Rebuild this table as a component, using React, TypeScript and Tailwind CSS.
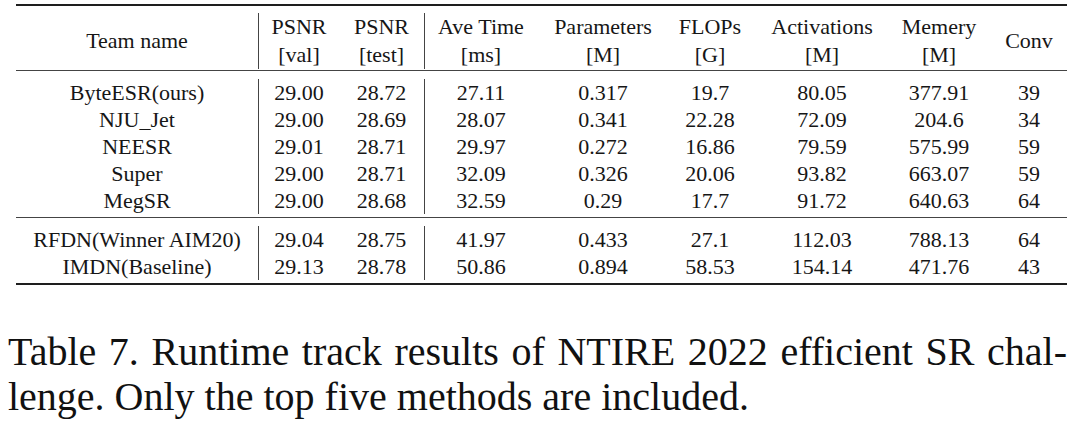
const cols = [
  "w-[243px] border-r border-[#444]",
  "w-[80px]",
  "w-[86px] border-r border-[#444]",
  "w-[112px]",
  "ml-[11px] w-[110px]",
  "ml-[17px] w-[70px]",
  "ml-[22px] w-[110px]",
  "ml-[17px] w-[90px]",
  "ml-[10px] w-[70px]",
];

const header: string[][] = [
  ["Team name"],
  ["PSNR", "[val]"],
  ["PSNR", "[test]"],
  ["Ave Time", "[ms]"],
  ["Parameters", "[M]"],
  ["FLOPs", "[G]"],
  ["Activations", "[M]"],
  ["Memery", "[M]"],
  ["Conv"],
];

const top5 = [
  ["ByteESR(ours)", "29.00", "28.72", "27.11", "0.317", "19.7", "80.05", "377.91", "39"],
  ["NJU_Jet", "29.00", "28.69", "28.07", "0.341", "22.28", "72.09", "204.6", "34"],
  ["NEESR", "29.01", "28.71", "29.97", "0.272", "16.86", "79.59", "575.99", "59"],
  ["Super", "29.00", "28.71", "32.09", "0.326", "20.06", "93.82", "663.07", "59"],
  ["MegSR", "29.00", "28.68", "32.59", "0.29", "17.7", "91.72", "640.63", "64"],
];

const baselines = [
  ["RFDN(Winner AIM20)", "29.04", "28.75", "41.97", "0.433", "27.1", "112.03", "788.13", "64"],
  ["IMDN(Baseline)", "29.13", "28.78", "50.86", "0.894", "58.53", "154.14", "471.76", "43"],
];

function Row({ cells }: { cells: string[] }) {
  return (
    <div className="flex h-[27px] items-center">
      {cells.map((c, i) => (
        <div key={i} className={`${cols[i]} flex h-full items-center justify-center whitespace-nowrap`}>
          {c}
        </div>
      ))}
    </div>
  );
}

function Section({ rows }: { rows: string[][] }) {
  return (
    <div className="pt-[8px] pb-[3px]">
      {rows.map((r, i) => (
        <Row key={i} cells={r} />
      ))}
    </div>
  );
}

export default function App() {
  return (
    <div className="h-[429px] w-[1080px] overflow-hidden bg-white font-['Liberation_Serif','Times_New_Roman',serif] text-[#161616]">
      <div className="ml-[16px] w-[1051px] pt-[4px] text-[22px] leading-[27px]">
        <div className="h-[2px] bg-[#1e1e1e]" />
        <div className="mt-[7px] mb-[1px] flex h-[56px] leading-[28px]">
          {header.map((h, i) => (
            <div key={i} className={`${cols[i]} flex flex-col items-center justify-center whitespace-nowrap`}>
              {h.map((l, j) => (
                <span key={j}>{l}</span>
              ))}
            </div>
          ))}
        </div>
        <div className="h-px bg-[#444]" />
        <Section rows={top5} />
        <div className="h-px bg-[#444]" />
        <Section rows={baselines} />
        <div className="h-[2px] bg-[#1e1e1e]" />
      </div>
      <div className="mt-[44px] ml-[8px] w-[1059px] text-[40px] leading-[45px] text-[#111]">
        <p className="text-justify [text-align-last:justify]">
          Table 7. Runtime track results of NTIRE 2022 efficient SR chal-
        </p>
        <p>lenge. Only the top five methods are included.</p>
      </div>
    </div>
  );
}
